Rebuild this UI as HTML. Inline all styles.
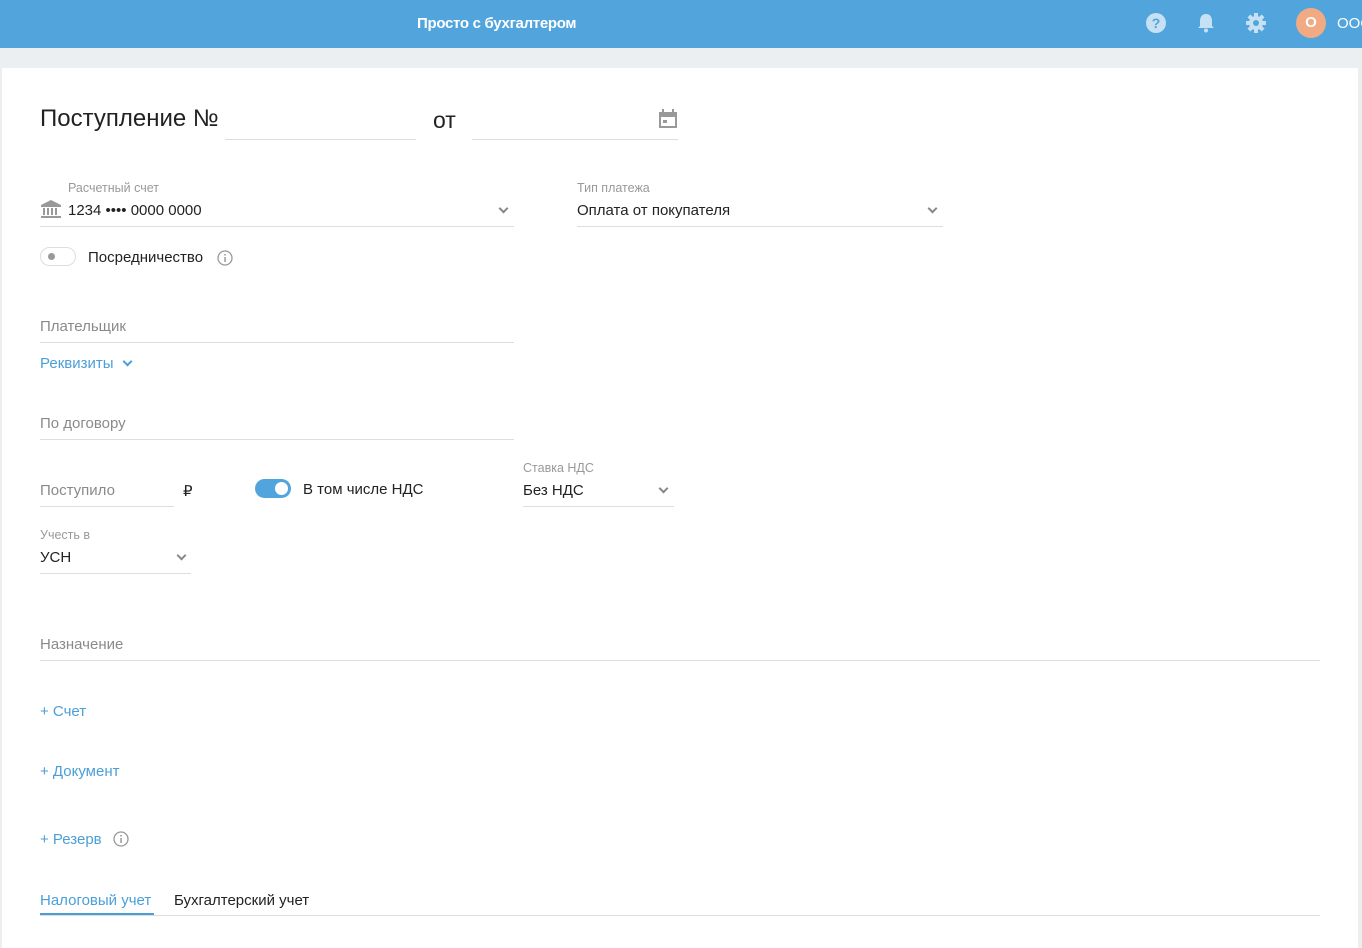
<!DOCTYPE html>
<html><head><meta charset="utf-8"><style>
body{margin:0;width:1362px;height:938px;overflow:hidden;background:#ebeff2;font-family:"Liberation Sans",Arial,sans-serif;position:relative}
.abs{position:absolute}
.top{left:0;top:0;width:1362px;height:48px;background:#52a5dc}
.card{left:2px;top:68px;width:1356px;height:880px;background:#fff}
.lbl{font-size:12.5px;color:#999}
.val{font-size:15px;color:#222}
.ph{font-size:15px;color:#8a8a8a}
.line{height:1px;background:#ddd}
.link{font-size:15px;color:#4a9fd8}
.chev{width:5px;height:5px;border-right:2px solid #888;border-bottom:2px solid #888;transform:rotate(45deg)}
</style></head><body>
<div class="abs top"></div>
<div class="abs" style="left:417px;top:15px;color:#fff;font-size:15px;font-weight:bold;letter-spacing:-0.3px">Просто с бухгалтером</div>
<svg class="abs" style="left:1145px;top:12px" width="22" height="22"><circle cx="11" cy="11" r="10" fill="#c6e0f4"/><text x="11" y="16" font-size="14" font-weight="bold" fill="#52a5dc" text-anchor="middle" font-family="Liberation Sans">?</text></svg>
<svg class="abs" style="left:1196px;top:12px" width="20" height="22"><path d="M10 2c-4 0-6 3-6 7v5l-2 2h16l-2-2V9c0-4-2-7-6-7z" fill="#c6e0f4"/><circle cx="10" cy="18.5" r="2" fill="#c6e0f4"/></svg>
<svg class="abs" style="left:1245px;top:12px" width="22" height="22"><g fill="#c6e0f4" transform="translate(11 11)"><circle r="7"/><rect x="-2" y="-10" width="4" height="20"/><rect x="-2" y="-10" width="4" height="20" transform="rotate(45)"/><rect x="-2" y="-10" width="4" height="20" transform="rotate(90)"/><rect x="-2" y="-10" width="4" height="20" transform="rotate(135)"/></g><circle cx="11" cy="11" r="3" fill="#52a5dc"/></svg>
<div class="abs" style="left:1296px;top:8px;width:30px;height:30px;border-radius:50%;background:#f2aa84;color:#fff;font-weight:bold;font-size:15px;text-align:center;line-height:30px">О</div>
<div class="abs" style="left:1337px;top:15px;color:#fff;font-size:15px">ООО</div>
<div class="abs card"></div>

<div class="abs" style="left:40px;top:105px;font-size:24px;color:#222">Поступление №</div>
<div class="abs line" style="left:225px;top:139px;width:191px"></div>
<div class="abs" style="left:433px;top:107px;font-size:23px;color:#222">от</div>
<div class="abs line" style="left:472px;top:139px;width:206px"></div>
<svg class="abs" style="left:658px;top:108px" width="20" height="22"><rect x="1" y="4" width="18" height="16" fill="#999"/><rect x="3" y="9" width="14" height="9" fill="#fff"/><rect x="5" y="12" width="4" height="3" fill="#999"/><rect x="4" y="1" width="2" height="4" fill="#999"/><rect x="14" y="1" width="2" height="4" fill="#999"/></svg>

<div class="abs lbl" style="left:68px;top:181px">Расчетный счет</div>
<svg class="abs" style="left:40px;top:199px" width="22" height="20"><path d="M11 1L1 6v2h20V6z" fill="#999"/><rect x="3" y="9" width="2" height="7" fill="#999"/><rect x="7" y="9" width="2" height="7" fill="#999"/><rect x="11" y="9" width="2" height="7" fill="#999"/><rect x="15" y="9" width="2" height="7" fill="#999"/><rect x="1" y="17" width="20" height="2" fill="#999"/></svg>
<div class="abs val" style="left:68px;top:202px">1234 •••• 0000 0000</div>
<div class="abs chev" style="left:500px;top:205px"></div>
<div class="abs line" style="left:40px;top:226px;width:474px"></div>
<div class="abs lbl" style="left:577px;top:181px">Тип платежа</div>
<div class="abs val" style="left:577px;top:202px">Оплата от покупателя</div>
<div class="abs chev" style="left:929px;top:205px"></div>
<div class="abs line" style="left:577px;top:226px;width:366px"></div>

<div class="abs" style="left:40px;top:247px;width:36px;height:19px;border:1px solid #ddd;border-radius:10px;box-sizing:border-box"></div>
<div class="abs" style="left:48px;top:253px;width:7px;height:7px;border-radius:50%;background:#999"></div>
<div class="abs val" style="left:88px;top:249px">Посредничество</div>
<svg class="abs" style="left:217px;top:250px" width="16" height="16"><circle cx="8" cy="8" r="7" fill="none" stroke="#999" stroke-width="1.3"/><rect x="7.3" y="7" width="1.5" height="5" fill="#999"/><circle cx="8" cy="4.8" r="0.9" fill="#999"/></svg>

<div class="abs ph" style="left:40px;top:318px">Плательщик</div>
<div class="abs line" style="left:40px;top:342px;width:474px"></div>
<div class="abs link" style="left:40px;top:355px">Реквизиты</div>
<div class="abs chev" style="left:124px;top:358px;border-color:#4a9fd8"></div>

<div class="abs ph" style="left:40px;top:415px">По договору</div>
<div class="abs line" style="left:40px;top:439px;width:474px"></div>

<div class="abs ph" style="left:40px;top:482px">Поступило</div>
<div class="abs line" style="left:40px;top:506px;width:134px"></div>
<div class="abs val" style="left:183px;top:482px">₽</div>
<div class="abs" style="left:255px;top:479px;width:36px;height:19px;border-radius:10px;background:#52a5dc"></div>
<div class="abs" style="left:275px;top:482px;width:13px;height:13px;border-radius:50%;background:#fff"></div>
<div class="abs val" style="left:303px;top:481px">В том числе НДС</div>
<div class="abs lbl" style="left:523px;top:461px">Ставка НДС</div>
<div class="abs val" style="left:523px;top:482px">Без НДС</div>
<div class="abs chev" style="left:660px;top:485px"></div>
<div class="abs line" style="left:523px;top:506px;width:151px"></div>

<div class="abs lbl" style="left:40px;top:528px">Учесть в</div>
<div class="abs val" style="left:40px;top:549px">УСН</div>
<div class="abs chev" style="left:178px;top:552px"></div>
<div class="abs line" style="left:40px;top:573px;width:151px"></div>

<div class="abs ph" style="left:40px;top:636px">Назначение</div>
<div class="abs line" style="left:40px;top:660px;width:1280px"></div>

<div class="abs link" style="left:40px;top:703px">+ Счет</div>
<div class="abs link" style="left:40px;top:763px">+ Документ</div>
<div class="abs link" style="left:40px;top:831px">+ Резерв</div>
<svg class="abs" style="left:113px;top:831px" width="16" height="16"><circle cx="8" cy="8" r="7" fill="none" stroke="#999" stroke-width="1.3"/><rect x="7.3" y="7" width="1.5" height="5" fill="#999"/><circle cx="8" cy="4.8" r="0.9" fill="#999"/></svg>

<div class="abs link" style="left:40px;top:892px">Налоговый учет</div>
<div class="abs" style="left:40px;top:913px;width:114px;height:2px;background:#4a9fd8"></div>
<div class="abs val" style="left:174px;top:892px">Бухгалтерский учет</div>
<div class="abs line" style="left:40px;top:915px;width:1280px"></div>
</body></html>
